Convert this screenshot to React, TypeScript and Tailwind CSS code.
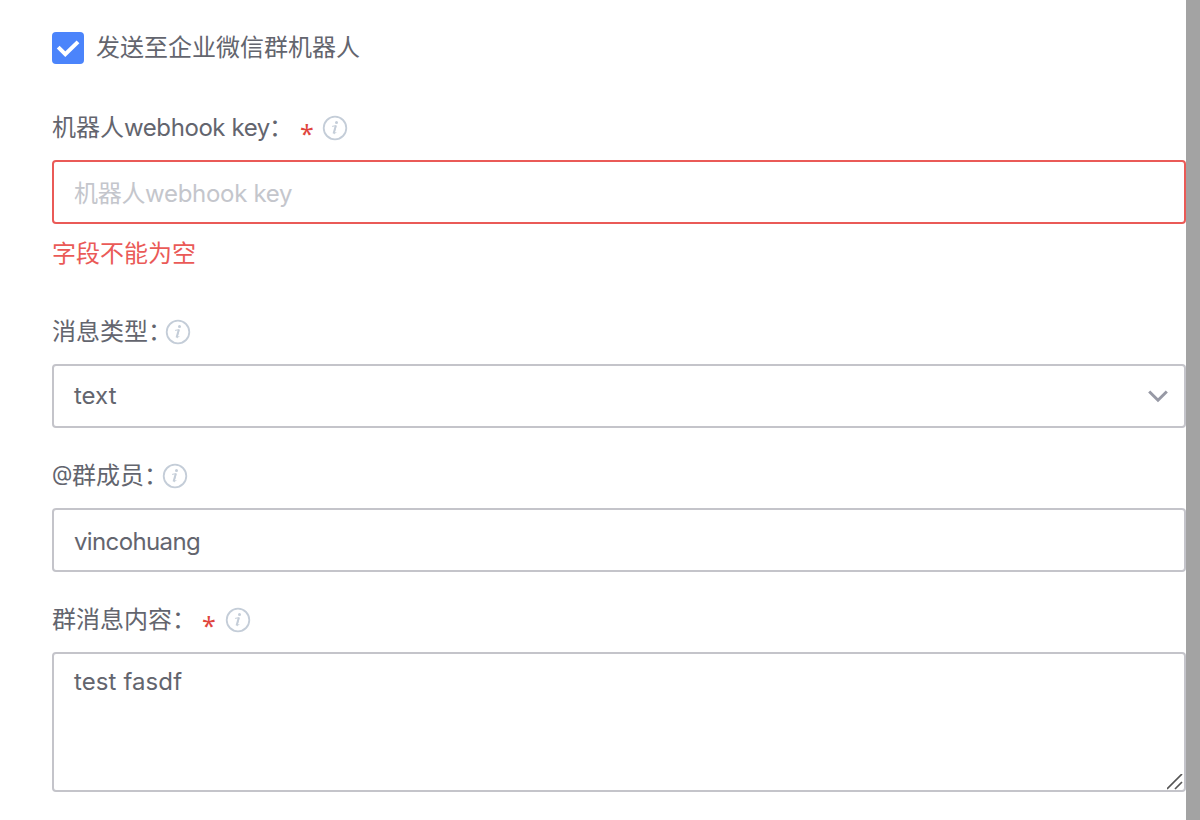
import React from "react";

const fieldBorder = "block w-full rounded-[4px] border-2 bg-white pl-5 outline-none";

function InfoIcon() {
  return (
    <svg className="block h-[26px] w-[26px] shrink-0" viewBox="0 0 26 26" fill="none">
      <circle cx="13" cy="13" r="11.3" stroke="#c4cdd8" strokeWidth="1.8" />
      <circle cx="14.5" cy="7.5" r="1.5" fill="#c4cdd8" />
      <path d="M10.1 11.4l4.1-.8-2.1 7.2c-.2.8.1 1 .6.7.6-.3 1-.8 1.5-1.4" stroke="#c4cdd8" strokeWidth="1" />
      <path d="M13.7 11l-2.1 7.4" stroke="#c4cdd8" strokeWidth="2" />
    </svg>
  );
}

function RequiredMark() {
  return (
    <span className="mt-[9px] block w-3 shrink-0 text-center font-['Noto_Sans'] text-[25px] leading-8 text-[#e0453e]">
      *
    </span>
  );
}

function Colon() {
  return <span className="block w-6 shrink-0">：</span>;
}

export default function App() {
  return (
    <div className="flex h-[820px] w-full overflow-hidden bg-white font-[Inter,'Noto_Sans_CJK_SC',sans-serif] text-[24px] leading-8 text-[#63656e]">
      <main className="flex min-w-0 flex-1 flex-col pl-[52px] pt-8">
        <label className="flex h-8 items-center gap-3">
          <span className="flex h-8 w-8 items-center justify-center rounded-[4px] bg-[#4b84fb]">
            <svg className="h-8 w-8" viewBox="0 0 32 32" fill="none">
              <path d="M6.2 15.2l7.1 7L26 9.9" stroke="white" strokeWidth="4" />
            </svg>
          </span>
          <span>发送至企业微信群机器人</span>
        </label>

        <div className="mt-12 flex h-8 items-center">
          <span>机器人</span>
          <span className="w-[145px] whitespace-pre tracking-[-0.42px]">webhook key</span>
          <Colon />
          <span className="ml-[7px]"><RequiredMark /></span>
          <span className="ml-[10px]"><InfoIcon /></span>
        </div>
        <input
          className={`${fieldBorder} mt-4 h-16 border-[#ea5a57] pt-0.5 tracking-[-0.3px] placeholder:text-[#c4c6cc] placeholder:opacity-100`}
          placeholder="机器人webhook key"
        />
        <p className="mt-[14px] h-8 text-[#ea5a57]">字段不能为空</p>

        <div className="mt-[46px] flex h-8 items-center">
          <span>消息类型</span>
          <Colon />
          <span className="-ml-[7px]"><InfoIcon /></span>
        </div>
        <div className={`${fieldBorder} mt-4 flex h-16 items-center justify-between border-[#c4c4ca] pr-4`}>
          <span>text</span>
          <svg className="h-5 w-5" viewBox="0 0 20 20" fill="none">
            <path d="M1.2 5.5l8.8 8.7 8.8-8.7" stroke="#9799a5" strokeWidth="3" />
          </svg>
        </div>

        <div className="mt-8 flex h-8 items-center">
          <span className="-mt-1 w-5 text-[21px]">@</span>
          <span>群成员</span>
          <Colon />
          <span className="-ml-[6.5px]"><InfoIcon /></span>
        </div>
        <input className={`${fieldBorder} mt-4 h-16 border-[#c4c4ca] pt-0.5 tracking-[-0.62px]`} defaultValue="vincohuang" />

        <div className="mt-8 flex h-8 items-center">
          <span>群消息内容</span>
          <Colon />
          <span className="ml-[6px]"><RequiredMark /></span>
          <span className="ml-[11px]"><InfoIcon /></span>
        </div>
        <div className="relative mt-4">
          <textarea
            className={`${fieldBorder} h-[140px] resize-none border-[#c4c4ca] pt-3 tracking-[0.1px]`}
            defaultValue="test fasdf"
          />
          <svg className="absolute bottom-[2px] right-[3px] h-4 w-4" viewBox="0 0 16 16" fill="none">
            <path d="M0 15L15 0M8 15l7-7" stroke="#555" strokeWidth="1.7" />
          </svg>
        </div>
      </main>
      <aside className="w-[14px] shrink-0 bg-[#a3a3a3]" />
    </div>
  );
}
